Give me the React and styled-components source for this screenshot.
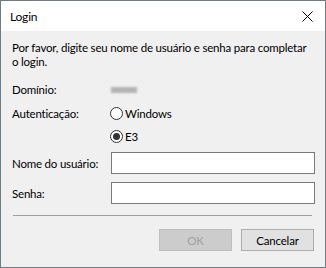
import React from 'react';
import styled, { createGlobalStyle } from 'styled-components';

const GlobalStyle = createGlobalStyle`
  body {
    margin: 0;
    background: #f0f0f0;
    font-family: Lato, "Open Sans", sans-serif;
    font-size: 11.5px;
    letter-spacing: -0.2px;
    color: #000;
  }
`;

const Window = styled.div`
  box-sizing: border-box;
  width: 326px;
  height: 268px;
  border: 1px solid #6e7c86;
  background: #f0f0f0;
  display: flex;
  flex-direction: column;
`;

const TitleBar = styled.div`
  height: 30px;
  background: #fff;
  display: flex;
  align-items: center;
  justify-content: space-between;
  padding: 0 12px 0 9px;
`;

const Title = styled.span`
  font-size: 12px;
`;

const CloseIcon = styled.svg`
  width: 11px;
  height: 11px;
`;

const Body = styled.div`
  padding: 10px 10px 0 11px;
  display: flex;
  flex-direction: column;
`;

const Intro = styled.p`
  margin: 0;
  max-width: 301px;
  line-height: 14px;
`;

const Form = styled.div`
  margin-top: 11px;
  display: flex;
  flex-direction: column;
`;

const Row = styled.div`
  display: grid;
  grid-template-columns: 99px 1fr;
  align-items: center;
  height: ${(p) => p.h}px;
  margin-top: ${(p) => p.mt || 0}px;
`;

const Label = styled.span``;

const Blurred = styled.span`
  width: 26px;
  height: 6px;
  background: #b4b4b4;
  filter: blur(1px);
`;

const RadioLabel = styled.label`
  display: flex;
  align-items: center;
  gap: 2px;
  margin-left: -1px;
`;

const RadioCircle = styled.span`
  box-sizing: border-box;
  width: 13px;
  height: 13px;
  border: 1px solid #333;
  border-radius: 50%;
  background: #fff;
  display: flex;
  align-items: center;
  justify-content: center;
  &::after {
    content: '';
    width: 7px;
    height: 7px;
    border-radius: 50%;
    background: #333;
    display: ${(p) => (p.checked ? 'block' : 'none')};
  }
`;

const Input = styled.input`
  box-sizing: border-box;
  width: 204px;
  height: 22px;
  border: 1px solid #7a7a7a;
  background: #fff;
  outline: none;
  padding: 0 3px;
  font: inherit;
`;

const Separator = styled.hr`
  margin: 11px 3px 0 1px;
  border: none;
  border-top: 1px solid #a0a0a0;
  height: 0;
`;

const Buttons = styled.div`
  margin-top: 13px;
  display: flex;
  justify-content: flex-end;
  gap: 9px;
  padding-right: 1px;
`;

const Button = styled.button`
  box-sizing: border-box;
  width: 73px;
  height: 22px;
  font: inherit;
  letter-spacing: inherit;
  padding: 0;
  border: 1px solid ${(p) => (p.disabled ? '#bfbfbf' : '#adadad')};
  background: ${(p) => (p.disabled ? '#cccccc' : '#e1e1e1')};
  color: ${(p) => (p.disabled ? '#a0a0a0' : '#000')};
`;

export default function App() {
  return (
    <>
      <GlobalStyle />
      <Window>
        <TitleBar>
          <Title>Login</Title>
          <CloseIcon viewBox="0 0 11 11">
            <path d="M0.5 0.5 L10.5 10.5 M10.5 0.5 L0.5 10.5" stroke="#000" strokeWidth="1" fill="none" />
          </CloseIcon>
        </TitleBar>
        <Body>
          <Intro>
            Por favor, digite seu nome de usuário e senha para completar o login.
          </Intro>
          <Form>
            <Row h={19}>
              <Label>Domínio:</Label>
              <Blurred />
            </Row>
            <Row h={24} mt={2}>
              <Label>Autenticação:</Label>
              <RadioLabel>
                <RadioCircle />
                Windows
              </RadioLabel>
            </Row>
            <Row h={23}>
              <span />
              <RadioLabel>
                <RadioCircle checked />
                E3
              </RadioLabel>
            </Row>
            <Row h={22} mt={4}>
              <Label>Nome do usuário:</Label>
              <Input />
            </Row>
            <Row h={22} mt={8}>
              <Label>Senha:</Label>
              <Input type="password" />
            </Row>
          </Form>
          <Separator />
          <Buttons>
            <Button disabled>OK</Button>
            <Button>Cancelar</Button>
          </Buttons>
        </Body>
      </Window>
    </>
  );
}
